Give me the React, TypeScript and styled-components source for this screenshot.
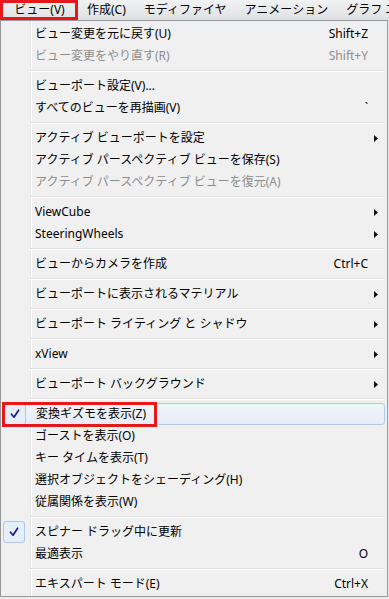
import React from 'react';
import styled, { createGlobalStyle } from 'styled-components'

const Global = createGlobalStyle`
    html, body {
        margin: 0;
        padding: 0;
        background: #ececec;
    }
    body {
        font-family: "Noto Sans", "Noto Sans CJK JP", sans-serif;
        font-size: 12px;
        color: #000;
    }
`

const Page = styled.div`
    width: 389px;
    height: 599px;
    overflow: hidden;
    display: flex;
    flex-direction: column;
`

const MenuBar = styled.div`
    height: 20px;
    flex: none;
    display: flex;
    align-items: stretch;
    overflow: hidden;
    background: linear-gradient(#f1f2f3, #dfe0e2);
    white-space: nowrap;
`

const MenuTitle = styled.div<{ $marked?: boolean }>`
    flex: none;
    display: flex;
    align-items: center;
    justify-content: center;
    padding: 0 9px;
    line-height: 20px;
    color: #000;
    box-sizing: border-box;
    ${p => p.$marked && `
        width: 78px;
        padding: 0 0 0 1px;
        outline: 3px solid #e81818;
        outline-offset: -3px;
    `}
`

const Menu = styled.div`
    width: 388px;
    height: 577px;
    flex: none;
    box-sizing: border-box;
    border: 1px solid #979797;
    padding: 2px 2px 1px;
    background:
        linear-gradient(to right, transparent 29px, #e2e3e3 29px, #e2e3e3 30px, #fff 30px, #fff 31px, transparent 31px),
        #f0f0f0;
    display: flex;
    flex-direction: column;
`

const Row = styled.div<{ $disabled?: boolean; $hot?: boolean }>`
    position: relative;
    height: 22px;
    flex: none;
    display: flex;
    align-items: center;
    box-sizing: border-box;
    color: ${p => (p.$disabled ? '#8d8d8d' : '#000')};
    white-space: nowrap;
    border-radius: 3px;
    ${p => p.$hot && `
        border: 1px solid #aecbef;
        background: linear-gradient(#f2f6fc, #e6ecf6);
    `}
`

const CheckCell = styled.div<{ $boxed?: boolean }>`
    width: 22px;
    height: 22px;
    flex: none;
    margin-right: 10px;
    box-sizing: border-box;
    display: flex;
    align-items: center;
    justify-content: center;
    border-radius: 3px;
    ${p => p.$boxed && `
        border: 1px solid #a9c9ef;
        background: #e6eefa;
    `}
`

const Label = styled.span`
    flex: 1;
    line-height: 22px;
`

const Shortcut = styled.span`
    line-height: 22px;
`

const ArrowCell = styled.div`
    width: 17px;
    flex: none;
    display: flex;
    align-items: center;
    padding-left: 6px;
    box-sizing: border-box;
`

const Separator = styled.div`
    height: 8px;
    flex: none;
    margin-left: 27px;
    display: flex;
    flex-direction: column;
    justify-content: center;

    &::before {
        content: '';
        height: 1px;
        background: #e0e0e0;
        border-bottom: 1px solid #fff;
    }
`

const Mark = styled.div`
    position: absolute;
    left: -2px;
    top: -2px;
    width: 155px;
    height: 25px;
    border: 3px solid #e81818;
    box-sizing: border-box;
    pointer-events: none;
`

type Item = {
    label: string
    shortcut?: string
    disabled?: boolean
    sub?: boolean
    checked?: boolean
    hot?: boolean
    marked?: boolean
}

const groups: Item[][] = [
    [
        { label: 'ビュー変更を元に戻す(U)', shortcut: 'Shift+Z' },
        { label: 'ビュー変更をやり直す(R)', shortcut: 'Shift+Y', disabled: true },
    ],
    [
        { label: 'ビューポート設定(V)...' },
        { label: 'すべてのビューを再描画(V)', shortcut: '`' },
    ],
    [
        { label: 'アクティブ ビューポートを設定', sub: true },
        { label: 'アクティブ パースペクティブ ビューを保存(S)' },
        { label: 'アクティブ パースペクティブ ビューを復元(A)', disabled: true },
    ],
    [
        { label: 'ViewCube', sub: true },
        { label: 'SteeringWheels', sub: true },
    ],
    [{ label: 'ビューからカメラを作成', shortcut: 'Ctrl+C' }],
    [{ label: 'ビューポートに表示されるマテリアル', sub: true }],
    [{ label: 'ビューポート ライティング と シャドウ', sub: true }],
    [{ label: 'xView', sub: true }],
    [{ label: 'ビューポート バックグラウンド', sub: true }],
    [
        { label: '変換ギズモを表示(Z)', checked: true, hot: true, marked: true },
        { label: 'ゴーストを表示(O)' },
        { label: 'キー タイムを表示(T)' },
        { label: '選択オブジェクトをシェーディング(H)' },
        { label: '従属関係を表示(W)' },
    ],
    [
        { label: 'スピナー ドラッグ中に更新', checked: true },
        { label: '最適表示', shortcut: 'O' },
    ],
    [{ label: 'エキスパート モード(E)', shortcut: 'Ctrl+X' }],
]

const titles = ['ビュー(V)', '作成(C)', 'モディファイヤ', 'アニメーション', 'グラフ エディタ']

function Check() {
    return (
        <svg width="10" height="10" viewBox="0 0 10 10">
            <path d="M1.5 5.2 L4 8.2 L8.6 1.2" fill="none" stroke="#1c1c8c" strokeWidth="1.7" strokeLinejoin="round" strokeLinecap="round" />
        </svg>
    )
}

function Arrow() {
    return (
        <svg width="4" height="7" viewBox="0 0 4 7">
            <path d="M0 0 L4 3.5 L0 7 Z" fill="#111" />
        </svg>
    )
}

function MenuRow({ item }: { item: Item }) {
    return (
        <Row $disabled={item.disabled} $hot={item.hot}>
            <CheckCell $boxed={item.checked}>{item.checked && <Check />}</CheckCell>
            <Label>{item.label}</Label>
            {item.shortcut && <Shortcut>{item.shortcut}</Shortcut>}
            <ArrowCell>{item.sub && <Arrow />}</ArrowCell>
            {item.marked && <Mark />}
        </Row>
    )
}

function App() {
    return (
        <React.Fragment>
            <Global />
            <Page>
                <MenuBar>
                    {titles.map((t, i) => (
                        <MenuTitle key={t} $marked={i === 0}>{t}</MenuTitle>
                    ))}
                </MenuBar>
                <Menu>
                    {groups.map((g, gi) => (
                        <React.Fragment key={gi}>
                            {gi > 0 && <Separator />}
                            {g.map(item => <MenuRow key={item.label} item={item} />)}
                        </React.Fragment>
                    ))}
                </Menu>
            </Page>
        </React.Fragment>
    );
}

export default App;
